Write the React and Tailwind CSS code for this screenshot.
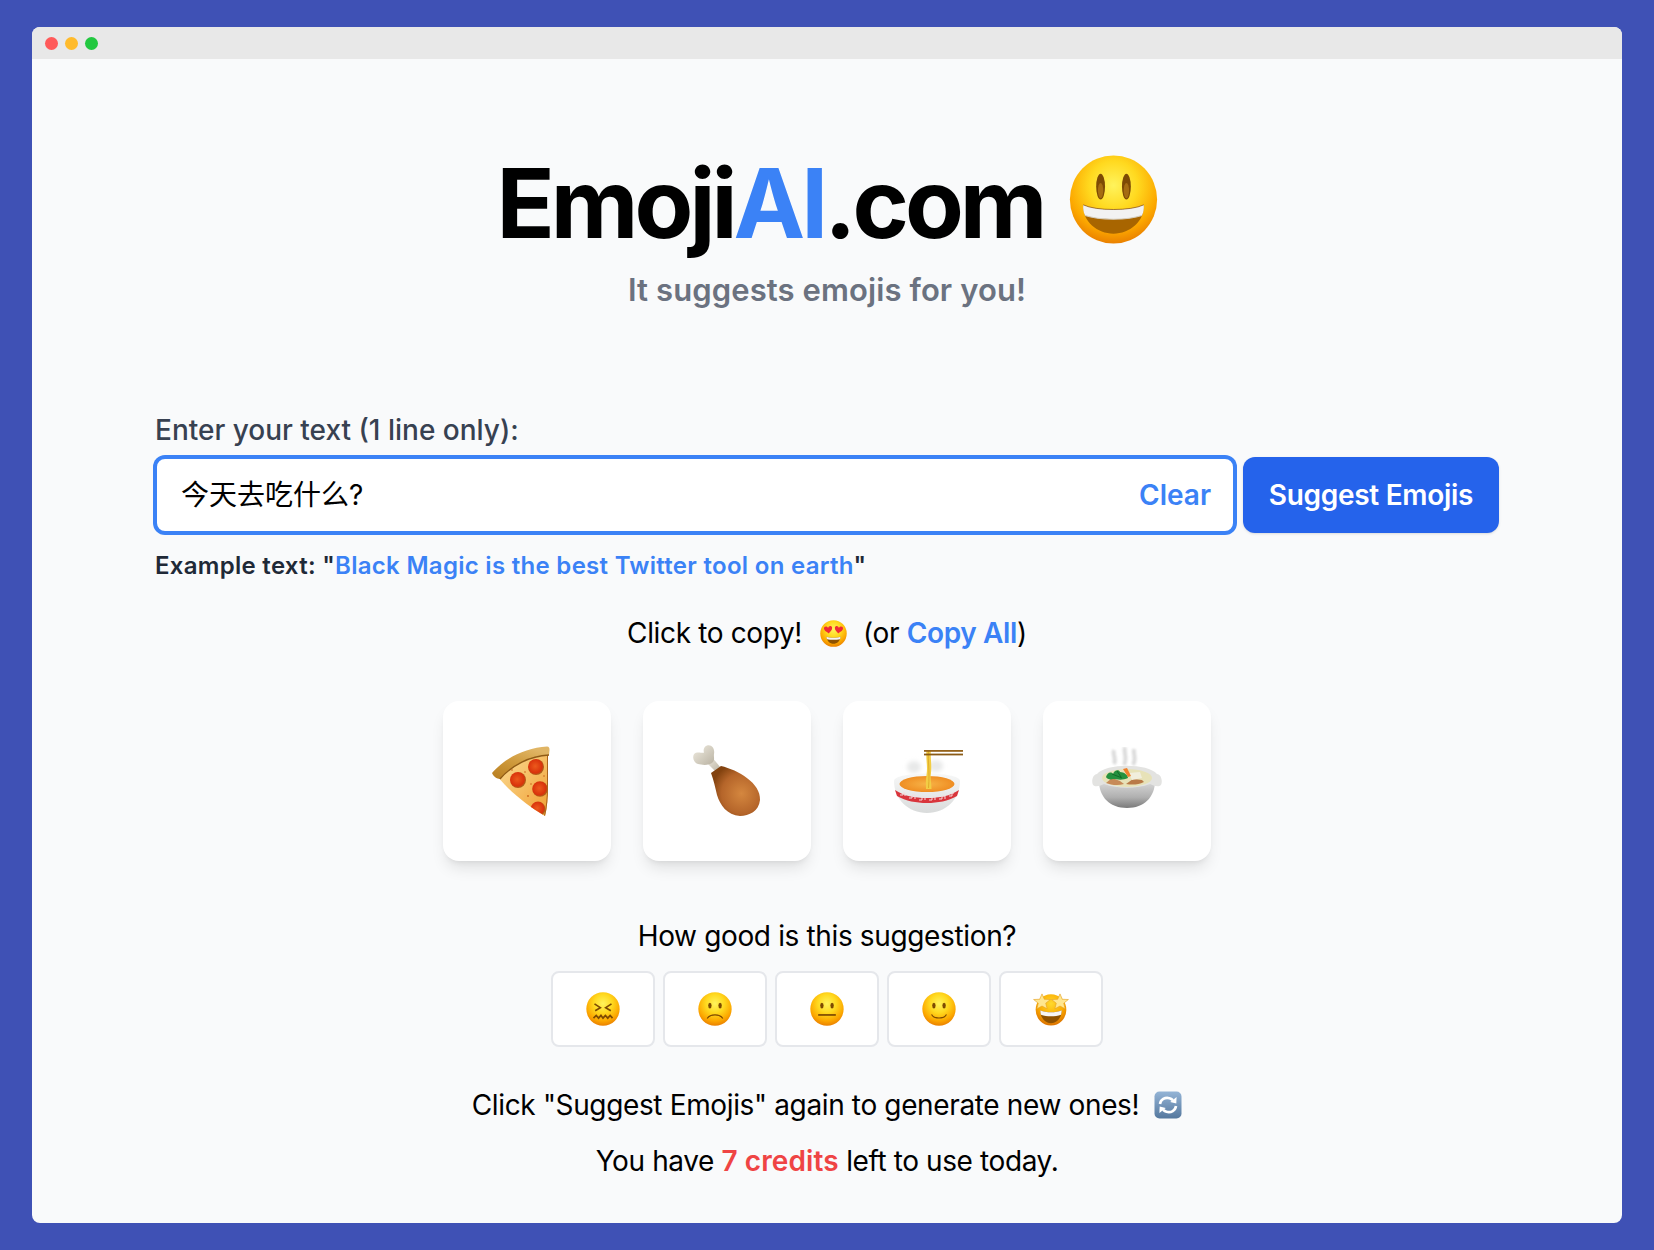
import React from "react";

function FaceBase({ id, size, children, className = "" }) {
  return (
    <svg viewBox="0 0 100 100" width={size} height={size} className={"shrink-0 " + className}>
      <defs>
        <radialGradient id={id} cx="50%" cy="34%" r="66%">
          <stop offset="0%" stopColor="#fff35c" />
          <stop offset="42%" stopColor="#ffd91f" />
          <stop offset="78%" stopColor="#fca800" />
          <stop offset="100%" stopColor="#ea8000" />
        </radialGradient>
      </defs>
      <ellipse cx="50" cy="50" rx="49" ry="49.5" fill={"url(#" + id + ")"} />
      {children}
    </svg>
  );
}

function BigSmile() {
  return (
    <FaceBase id="bigface" size={89} className="mb-[7px]">
      <ellipse cx="35.5" cy="35.5" rx="5" ry="14.5" fill="#7d4a04" />
      <ellipse cx="64.5" cy="35.5" rx="5" ry="14.5" fill="#7d4a04" />
      <ellipse cx="35.5" cy="40" rx="3" ry="8.5" fill="#a56c12" />
      <ellipse cx="64.5" cy="40" rx="3" ry="8.5" fill="#a56c12" />
      <path d="M16 56 C30 63 70 63 84 56 C85 75 68 88.5 50 88.5 C32 88.5 15 75 16 56 Z" fill="#a86500" />
      <path d="M16 56 C30 63 70 63 84 56 C84.5 61 83.5 65 82 68 C66 73.5 34 73.5 18 68 C16.5 65 15.5 61 16 56 Z" fill="#f2f2f2" />
      <path d="M18 68 C34 73.5 66 73.5 82 68" stroke="#d4cdbd" strokeWidth="1.2" fill="none" />
      <path d="M16 56 C30 63 70 63 84 56" stroke="#8a5204" strokeWidth="0.8" fill="none" />
    </FaceBase>
  );
}

function HeartEyes() {
  const heart = "M0 3 C-1.5 -1.5 -8 -1.5 -8 3.5 C-8 8 -2 11 0 14 C2 11 8 8 8 3.5 C8 -1.5 1.5 -1.5 0 3 Z";
  return (
    <FaceBase id="heartface" size={27}>
      <path d={heart} fill="#ee2a35" transform="translate(29 24) scale(1.9) rotate(-8)" />
      <path d={heart} fill="#ee2a35" transform="translate(71 24) scale(1.9) rotate(8)" />
      <path d="M24 62 C38 67 62 67 76 62 C75 78 63 88 50 88 C37 88 25 78 24 62 Z" fill="#8f5200" />
      <path d="M24 62 C38 67 62 67 76 62 C76 66 75 69 74 71 C60 74 40 74 26 71 C25 69 24 66 24 62 Z" fill="#f4f4f4" />
    </FaceBase>
  );
}

function Confounded() {
  return (
    <FaceBase id="conf" size={34}>
      <path d="M25 35 L42 46 L27 55" stroke="#7d4a02" strokeWidth="5" fill="none" />
      <path d="M75 35 L58 46 L73 55" stroke="#7d4a02" strokeWidth="5" fill="none" />
      <path d="M22 77 L30 69 L37 77 L44 69 L50 77 L57 69 L64 77 L71 69 L78 77" stroke="#7d4a02" strokeWidth="5" fill="none" />
    </FaceBase>
  );
}

function Eyes() {
  return (
    <>
      <ellipse cx="35" cy="40" rx="5" ry="8.5" fill="#7d4a02" />
      <ellipse cx="65" cy="40" rx="5" ry="8.5" fill="#7d4a02" />
    </>
  );
}

function Frown() {
  return (
    <FaceBase id="frown" size={34}>
      <Eyes />
      <path d="M27 78 C36 64 64 64 73 78" stroke="#7d4a02" strokeWidth="3.6" fill="none" />
    </FaceBase>
  );
}

function Neutral() {
  return (
    <FaceBase id="neutral" size={34}>
      <Eyes />
      <rect x="24" y="65" width="52" height="5" fill="#7d4a02" />
    </FaceBase>
  );
}

function Slight() {
  return (
    <FaceBase id="slight" size={34}>
      <Eyes />
      <path d="M28 66 C36 80 64 80 72 66" stroke="#7d4a02" strokeWidth="3.6" fill="none" />
    </FaceBase>
  );
}

function StarStruck() {
  const star = "M0 -17 L5 -5.5 L18 -5 L8 3 L11 15 L0 9 L-11 15 L-8 3 L-18 -5 L-5 -5.5 Z";
  return (
    <svg viewBox="0 0 108 104" width={36} height={35} className="shrink-0">
      <defs>
        <radialGradient id="starface" cx="50%" cy="30%" r="68%">
          <stop offset="0%" stopColor="#ffd92e" />
          <stop offset="60%" stopColor="#fbab00" />
          <stop offset="100%" stopColor="#dd7500" />
        </radialGradient>
      </defs>
      <ellipse cx="54" cy="53" rx="46" ry="47" fill="url(#starface)" />
      <path d="M22 54 C40 62 68 62 86 54 C86 78 71 93 54 93 C37 93 22 78 22 54 Z" fill="#8f5200" />
      <path d="M22 54 C40 62 68 62 86 54 C86 60 85 64 84 68 C66 74 42 74 24 68 C23 64 22 60 22 54 Z" fill="#f6f6f6" />
      <path d={star} fill="#ffe68f" stroke="#e7a526" strokeWidth="1.4" transform="translate(27 29) scale(1.4)" />
      <path d={star} fill="#ffe68f" stroke="#e7a526" strokeWidth="1.4" transform="translate(81 29) scale(1.4)" />
    </svg>
  );
}

function Pizza() {
  return (
    <svg viewBox="0 0 58 71" width={58} height={71} className="shrink-0">
      <defs>
        <linearGradient id="crust" x1="0" y1="1" x2="0.6" y2="0">
          <stop offset="0%" stopColor="#b77d1f" />
          <stop offset="55%" stopColor="#cf9a3c" />
          <stop offset="100%" stopColor="#e0b565" />
        </linearGradient>
        <linearGradient id="cheese" x1="0" y1="0" x2="1" y2="1">
          <stop offset="0%" stopColor="#fbdc94" />
          <stop offset="100%" stopColor="#f0a033" />
        </linearGradient>
        <radialGradient id="pep" cx="45%" cy="45%" r="55%">
          <stop offset="0%" stopColor="#ec5a1c" />
          <stop offset="78%" stopColor="#d9330c" />
          <stop offset="100%" stopColor="#a9621a" />
        </radialGradient>
        <clipPath id="slice">
          <path d="M6 31 C18 20 36 12 56 9 L56 40 C56 52 55 62 53 70 C36 60 18 46 6 31 Z" />
        </clipPath>
      </defs>
      <path d="M6 31 C18 20 36 12 56 9 L56 40 C56 52 55 62 53 70 C36 60 18 46 6 31 Z" fill="url(#cheese)" />
      <g clipPath="url(#slice)">
        <circle cx="44" cy="21" r="8" fill="url(#pep)" />
        <circle cx="26" cy="34" r="8" fill="url(#pep)" />
        <circle cx="48" cy="43" r="7.8" fill="url(#pep)" />
        <circle cx="46" cy="63" r="7.4" fill="url(#pep)" />
        <circle cx="20" cy="24" r="0.8" fill="#c9641c" />
        <circle cx="36" cy="50" r="0.9" fill="#c9641c" />
        <circle cx="33" cy="26" r="0.8" fill="#c9641c" />
        <circle cx="39" cy="38" r="0.8" fill="#c9641c" />
        <circle cx="52" cy="30" r="0.8" fill="#c9641c" />
        <path d="M56 9 L56 40 C56 52 55 62 53 70" stroke="#a9621a" strokeWidth="2" fill="none" />
      </g>
      <path d="M0 27 C14 11 34 2 55 0.5 C57 0.5 57.5 2 57.5 4 L57 9 C38 10 20 19 8 33 C5 33 1 30 0 27 Z" fill="url(#crust)" />
      <path d="M8 33 C20 19 38 10 57 9" stroke="#8f5a14" strokeWidth="1.3" fill="none" />
    </svg>
  );
}

function Drumstick() {
  return (
    <svg viewBox="0 0 68 72" width={68} height={72} className="shrink-0">
      <defs>
        <radialGradient id="meat" cx="62%" cy="55%" r="62%">
          <stop offset="0%" stopColor="#d4873f" />
          <stop offset="65%" stopColor="#b5652a" />
          <stop offset="100%" stopColor="#82420f" />
        </radialGradient>
        <linearGradient id="bone" x1="0" y1="0" x2="1" y2="1">
          <stop offset="0%" stopColor="#f1ede2" />
          <stop offset="100%" stopColor="#b9b2a2" />
        </linearGradient>
      </defs>
      <path d="M12 16 L24 28 L28 23 L18 11 Z" fill="url(#bone)" />
      <path d="M14 0.5 C19 -1 22 4 21 9 C20.5 12 22 14 20 17 C16 21 9 20 5 19 C-1 17.5 -1.5 8 4 7.5 C7 7 10 8.5 11 7.5 C10 5 11 1.5 14 0.5 Z" fill="url(#bone)" />
      <path d="M18 28 L28 21 C45 25 68 38 67 55 C66 66 56 71 47 71 C34 70 27 60 24 50 C22 42 21 36 18 28 Z" fill="url(#meat)" />
    </svg>
  );
}

function Noodles() {
  return (
    <svg viewBox="0 0 69 65" width={69} height={65} className="shrink-0">
      <defs>
        <linearGradient id="bowl" x1="0" y1="0" x2="0" y2="1">
          <stop offset="0%" stopColor="#f7f8f8" />
          <stop offset="100%" stopColor="#d9dbdb" />
        </linearGradient>
        <radialGradient id="broth" cx="50%" cy="50%" r="55%">
          <stop offset="0%" stopColor="#f7b347" />
          <stop offset="100%" stopColor="#ee8a1f" />
        </radialGradient>
        <filter id="nsteam" x="-30%" y="-30%" width="160%" height="160%">
          <feGaussianBlur stdDeviation="2" />
        </filter>
      </defs>
      <g filter="url(#nsteam)" fill="#e8e9e9">
        <ellipse cx="20" cy="18" rx="7" ry="6" />
        <ellipse cx="42" cy="17" rx="7" ry="6" />
      </g>
      <path d="M0 32 C0 22 66 22 66 32 C66 50 52 64 33 64 C14 64 0 50 0 32 Z" fill="url(#bowl)" />
      <ellipse cx="33" cy="35" rx="27.5" ry="8" fill="url(#broth)" />
      <path d="M1 41 C10 47 20 49 33 49 C46 49 56 47 65 41 L63 47 C54 52 44 54 33 54 C22 54 12 52 3 47 Z" fill="#d9353c" />
      <path d="M6 46 h3 v-2 h2 v3 M15 49 h3 v-3 h3 v4 M25 51 h3 v-3 h3 v3 M35 51 h3 v-3 h3 v3 M45 50 h3 v-3 h3 v3 M55 47 h3 v-3 h2" stroke="#f4dcdc" strokeWidth="1" fill="none" />
      <path d="M32.5 1 C31.5 10 34 16 32.5 26 C31.5 31 32 36 32 40 L37.5 40 C37.5 34 36 30 37 24 C38 14 36 8 37 1 Z" fill="#f2cd45" />
      <path d="M34.5 2 C33.5 12 36 20 34.5 39" stroke="#d99f1f" strokeWidth="0.7" fill="none" />
      <rect x="30" y="1" width="39" height="1.8" fill="#94621a" />
      <rect x="30" y="4.6" width="39" height="1.8" fill="#8a5a16" />
    </svg>
  );
}

function Stew() {
  return (
    <svg viewBox="0 0 70 62" width={70} height={62} className="shrink-0">
      <defs>
        <linearGradient id="pot" x1="0" y1="0" x2="0" y2="1">
          <stop offset="0%" stopColor="#d9d9d9" />
          <stop offset="60%" stopColor="#b0b0b0" />
          <stop offset="100%" stopColor="#7a7a7a" />
        </linearGradient>
        <filter id="ssteam" x="-40%" y="-20%" width="180%" height="140%">
          <feGaussianBlur stdDeviation="1.2" />
        </filter>
      </defs>
      <path d="M22 3 C20 8 25 11 22 17 M33 0 C31 6 36 10 32 18 M42 2 C41 8 45 11 41 18" stroke="#dcdcdc" strokeWidth="4" fill="none" filter="url(#ssteam)" />
      <path d="M7 34 L63 34 C63 50 52 61 35 61 C18 61 7 50 7 34 Z" fill="url(#pot)" />
      <path d="M5 27 C14 16 56 16 65 27 C69 27 71 34 69 38 C66 41 61 38 58 37 C44 42 26 42 12 37 C9 38 4 41 1 38 C-1 34 1 27 5 27 Z" fill="#e3e3e1" />
      <ellipse cx="35" cy="31" rx="25" ry="9" fill="#e7e2b8" />
      <path d="M14 36 L20 31 L28 34 L32 37 C26 39 19 38 14 36 Z" fill="#c78a58" />
      <path d="M34 37 L41 32 L50 33 L52 35 C46 38 40 38 34 37 Z" fill="#b97a48" />
      <path d="M37 26 L48 25 L50 31 L40 33 Z" fill="#f1eedd" />
      <path d="M14 30 C15 26 19 24 21 27 C22 23 27 22 28 25 C32 25 36 28 36 31 C30 34 24 32 21 32 C18 33 15 32 14 30 Z" fill="#25913e" />
      <path d="M20 27 L30 31 M25 24 L29 30" stroke="#136a28" strokeWidth="1" fill="none" />
      <path d="M31 22 L35 21 L39 29 L36 30 Z" fill="#ef7f2c" />
    </svg>
  );
}

function Refresh() {
  return (
    <svg viewBox="0 0 28 28" width={28} height={28} className="shrink-0">
      <defs>
        <linearGradient id="tile" x1="0" y1="0" x2="0" y2="1">
          <stop offset="0%" stopColor="#94b4d6" />
          <stop offset="100%" stopColor="#55789e" />
        </linearGradient>
      </defs>
      <rect x="0.5" y="0.5" width="27" height="27" rx="5" fill="url(#tile)" />
      <path d="M6 13 C6.5 8.5 11 6 15.5 7.2 C17 7.6 18 8.3 19 9.2" stroke="#fff" strokeWidth="2.6" fill="none" />
      <path d="M22.6 6 L22.3 12.4 L16.2 11 Z" fill="#fff" />
      <path d="M22 15 C21.5 19.5 17 22 12.5 20.8 C11 20.4 10 19.7 9 18.8" stroke="#fff" strokeWidth="2.6" fill="none" />
      <path d="M5.4 22 L5.7 15.6 L11.8 17 Z" fill="#fff" />
    </svg>
  );
}

const foods = [Pizza, Drumstick, Noodles, Stew];
const foodOffsets = ["pr-[12px]", "pb-[0px]", "pl-[2px]", "pb-[6px]"];
const ratings = [Confounded, Frown, Neutral, Slight, StarStruck];

export default function App() {
  return (
    <div className="h-[1250px] bg-[#3f51b5] pt-[27px] pb-[27px] px-[32px] font-[Inter,'Noto_Sans_CJK_SC',sans-serif] text-black">
      <div className="h-full rounded-lg overflow-hidden bg-[#f9fafb] flex flex-col">
        <div className="h-[32px] shrink-0 bg-[#e8e8e8] flex items-center gap-[7px] pl-[13px]">
          <span className="w-[13px] h-[13px] rounded-full bg-[#ff5a5a]" />
          <span className="w-[13px] h-[13px] rounded-full bg-[#ffbb2c]" />
          <span className="w-[13px] h-[13px] rounded-full bg-[#22c840]" />
        </div>

        <div className="flex-1 flex flex-col items-center pt-[96px]">
          <div className="flex items-center gap-[25px] h-[96px]">
            <h1 className="text-8xl font-bold tracking-[-3.95px] leading-none">
              Emoji<span className="text-[#3b82f6]">AI</span>.com
            </h1>
            <BigSmile />
          </div>
          <p className="mt-[21px] text-[31px] leading-[36px] tracking-[0.1px] font-semibold text-[#6b7280]">It suggests emojis for you!</p>

          <div className="w-[1344px] mt-[104px]">
            <label className="block text-[28px] leading-[36px] font-medium text-[#374151]">Enter your text (1 line only):</label>
            <div className="mt-[9px] flex gap-2">
              <div className="flex-1 h-[76px] flex items-center rounded-[10px] border-2 border-[#3b82f6] ring-2 ring-[#3b82f6] bg-white pl-[24px] pr-[22px]">
                <input
                  readOnly
                  value="今天去吃什么?"
                  className="flex-1 min-w-0 bg-transparent outline-none text-[28px] text-black"
                />
                <button className="text-[28px] font-semibold text-[#3b82f6]">Clear</button>
              </div>
              <button className="w-[256px] h-[76px] rounded-xl bg-[#2563eb] text-white text-[28px] tracking-[-0.3px] font-semibold shadow-sm">Suggest Emojis</button>
            </div>
            <p className="mt-[17px] text-2xl tracking-[0.29px] font-semibold text-[#1f2937]">
              Example text: "<span className="text-[#3b82f6]">Black Magic is the best Twitter tool on earth</span>"
            </p>
          </div>

          <div className="mt-[33px] flex items-center h-[36px] text-[28px] tracking-[-0.36px]">
            <span>Click to copy!</span>
            <span className="ml-[18px] mr-[16px]"><HeartEyes /></span>
            <span>(or <span className="font-semibold text-[#3b82f6]">Copy All</span>)</span>
          </div>

          <div className="mt-[50px] flex gap-8">
            {foods.map((F, i) => (
              <button key={i} className={"w-[168px] h-[160px] rounded-2xl bg-white shadow-lg flex items-center justify-center " + foodOffsets[i]}>
                <F />
              </button>
            ))}
          </div>

          <p className="mt-[57px] text-[28px] leading-[36px] tracking-[-0.36px]">How good is this suggestion?</p>

          <div className="mt-[17px] flex gap-2">
            {ratings.map((R, i) => (
              <button key={i} className="w-[104px] h-[76px] rounded-lg border-2 border-[#e5e7eb] bg-white flex items-center justify-center">
                <R />
              </button>
            ))}
          </div>

          <div className="mt-[40px] flex items-center h-[36px] text-[28px] tracking-[-0.36px]">
            <span>Click "Suggest Emojis" again to generate new ones!</span>
            <span className="ml-[15px]"><Refresh /></span>
          </div>

          <p className="mt-[20px] text-[28px] leading-[36px] tracking-[-0.4px]">
            You have <span className="font-semibold tracking-[0.1px] text-[#ef4444]">7 credits</span> left to use today.
          </p>
        </div>
      </div>
    </div>
  );
}
